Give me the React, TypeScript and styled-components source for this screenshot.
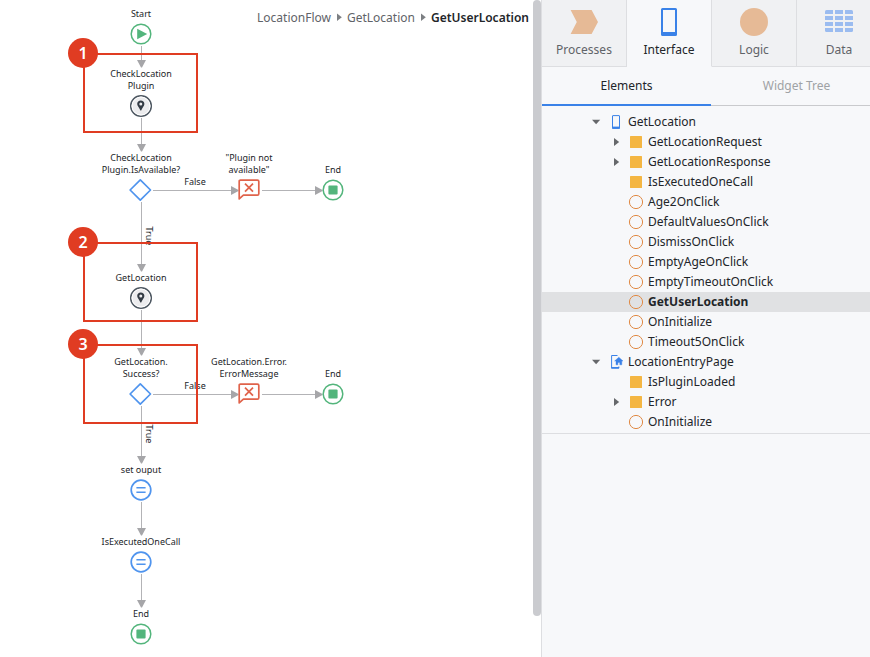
import React from "react";
import styled, { createGlobalStyle, css } from "styled-components";

const colors = {
  text: "#222529",
  muted: "#5f6368",
  faint: "#a0a2a5",
  blue: "#3a82e8",
  flowBlue: "#4f94ee",
  green: "#53b57c",
  red: "#e03c22",
  coral: "#e0634b",
  orange: "#e08a45",
  tan: "#e6ba96",
  yellow: "#f4b642",
  panel: "#f7f8fa",
  tab: "#f0f1f3",
  line: "#dddee1",
  edge: "#b3b3b6",
  arrow: "#a6a6a9",
};

const GlobalStyle = createGlobalStyle`
  *, *::before, *::after { box-sizing: border-box; }
  body {
    margin: 0;
    background: #fff;
    color: ${colors.text};
    font-family: "Noto Sans", sans-serif;
    font-size: 12px;
  }
  button { font: inherit; color: inherit; }
`;

const Page = styled.div`
  display: grid;
  grid-template-columns: minmax(0, 1fr) 329px;
  min-height: 100vh;
`;

/* ---------- Flow canvas ---------- */

const Canvas = styled.main`
  position: relative;
  min-height: 652px;
  background: #fff;
`;

const Breadcrumb = styled.nav`
  position: relative;
  z-index: 1;
  display: flex;
  justify-content: flex-end;
  align-items: center;
  gap: 3px;
  height: 34px;
  padding-right: 12px;
`;

const Crumb = styled.a<{ $current?: boolean }>`
  color: ${(p) => (p.$current ? colors.text : colors.muted)};
  font-weight: ${(p) => (p.$current ? 600 : 400)};
  text-decoration: none;
`;

const ScrollThumb = styled.div`
  position: absolute;
  top: 0;
  right: 0;
  width: 8px;
  height: 616px;
  border-radius: 4px;
  background: #cacbcf;
`;

const Diagram = styled.div`
  position: absolute;
  inset: 0;
  overflow: hidden;
  font-size: 9px;
  line-height: 12px;
`;

const Edges = styled.svg`
  position: absolute;
  inset: 0;
  width: 100%;
  height: 100%;
`;

const NodeBox = styled.div`
  position: absolute;
  display: flex;
  flex-direction: column;
  align-items: center;
  gap: 3px;
  width: 120px;
  text-align: center;
  svg {
    display: block;
    overflow: visible;
  }
`;

const NodeLabel = styled.div`
  display: flex;
  flex-direction: column;
  justify-content: flex-end;
  height: 24px;
  white-space: nowrap;
`;

const EdgeLabel = styled.span<{ $vertical?: boolean }>`
  position: absolute;
  transform: translate(-50%, -50%) ${(p) => (p.$vertical ? "rotate(90deg)" : "")};
`;

const Highlight = styled.div`
  position: absolute;
  width: 115px;
  height: 80px;
  border: 2px solid ${colors.red};
`;

const Badge = styled.span`
  position: absolute;
  top: -17px;
  left: -17px;
  display: grid;
  place-items: center;
  width: 30px;
  height: 30px;
  border-radius: 50%;
  background: ${colors.red};
  color: #fff;
  font-size: 16px;
  font-weight: 600;
`;

type Kind = "start" | "pin" | "if" | "message" | "end" | "assign";

function NodeIcon({ kind }: { kind: Kind }) {
  return (
    <svg width="22" height="22" viewBox="0 0 22 22" fill="none" aria-hidden="true">
      {kind === "start" && (
        <>
          <circle cx="11" cy="11" r="9.8" stroke={colors.green} strokeWidth="1.5" />
          <path d="M7.2 5.8 17.2 11 7.2 16.2Z" fill={colors.green} />
        </>
      )}
      {kind === "end" && (
        <>
          <circle cx="11" cy="11" r="9.8" stroke={colors.green} strokeWidth="1.5" />
          <rect x="6.4" y="6.4" width="9.2" height="9.2" rx="1" fill={colors.green} />
        </>
      )}
      {kind === "assign" && (
        <>
          <circle cx="11" cy="11" r="9.8" stroke={colors.flowBlue} strokeWidth="1.7" />
          <path d="M6.4 8.7h9.200M6.4 13.2h9.200" stroke={colors.flowBlue} strokeWidth="1.5" />
        </>
      )}
      {kind === "if" && (
        <path
          d="M10.3 .9 20.5 11 10.3 21.1 .1 11Z"
          stroke={colors.flowBlue}
          strokeWidth="1.7"
          strokeLinejoin="round"
        />
      )}
      {kind === "message" && (
        <>
          <path
            d="M1.2 19.9V2.2Q1.2 1.2 2.4 1.200H19.4Q20.8 1.2 20.8 2.6V14.8Q20.8 16.2 19.4 16.200H5.4Z"
            stroke={colors.coral}
            strokeWidth="1.7"
            strokeLinejoin="round"
          />
          <path d="M7 4.7l8 8M15 4.700l-8 8" stroke={colors.coral} strokeWidth="1.7" />
        </>
      )}
      {kind === "pin" && (
        <>
          <circle cx="11" cy="11" r="10.3" fill="#ececee" stroke="#4d5761" strokeWidth="1.5" />
          <circle cx="11" cy="11" r="9" stroke="#fff" strokeWidth="1" />
          <path
            fillRule="evenodd"
            d="M10.8 5.6c-2.1 0-3.6 1.5-3.6 3.5 0 2.2 2.4 3.8 3.2 6.5h.8c.8-2.7 3.2-4.3 3.2-6.5 0-2-1.5-3.5-3.6-3.500Zm0 2a1.500 1.500 0 1 1 0 3 1.500 1.500 0 0 1 0-3Z"
            fill="#333b44"
          />
        </>
      )}
    </svg>
  );
}

const nodes: { kind: Kind; x: number; y: number; label: string[] }[] = [
  { kind: "start", x: 141, y: 34, label: ["Start"] },
  { kind: "pin", x: 141, y: 106, label: ["CheckLocation", "Plugin"] },
  { kind: "if", x: 141, y: 190, label: ["CheckLocation", "Plugin.IsAvailable?"] },
  { kind: "message", x: 249, y: 190, label: ['"Plugin not', 'available"'] },
  { kind: "end", x: 333, y: 190, label: ["End"] },
  { kind: "pin", x: 141, y: 298, label: ["GetLocation"] },
  { kind: "if", x: 141, y: 394, label: ["GetLocation.", "Success?"] },
  { kind: "message", x: 249, y: 394, label: ["GetLocation.Error.", "ErrorMessage"] },
  { kind: "end", x: 333, y: 394, label: ["End"] },
  { kind: "assign", x: 141, y: 490, label: ["set ouput"] },
  { kind: "assign", x: 141, y: 562, label: ["IsExecutedOneCall"] },
  { kind: "end", x: 141, y: 634, label: ["End"] },
];

const downEdges = [
  [46, 67],
  [118, 151],
  [202, 271],
  [310, 355],
  [406, 463],
  [502, 535],
  [574, 607],
];

const rightEdges = [
  [190, 153, 238],
  [190, 262, 322],
  [394, 153, 238],
  [394, 262, 322],
];

const edgeLabels = [
  { text: "False", x: 195, y: 182 },
  { text: "False", x: 195, y: 386 },
  { text: "True", x: 149, y: 236, vertical: true },
  { text: "True", x: 149, y: 434, vertical: true },
];

const highlights = [
  { n: 1, y: 53 },
  { n: 2, y: 242 },
  { n: 3, y: 344 },
];

function Flow() {
  return (
    <Diagram>
      <Edges aria-hidden="true">
        {downEdges.map(([from, to]) => (
          <g key={from}>
            <path d={`M141.5 ${from}V${to - 6}`} stroke={colors.edge} />
            <path d={`M137 ${to - 7}h9l-4 7.500h-1Z`} fill={colors.arrow} />
          </g>
        ))}
        {rightEdges.map(([y, from, to]) => (
          <g key={`${y}-${from}`}>
            <path d={`M${from} ${y + 0.5}H${to - 6}`} stroke={colors.edge} />
            <path d={`M${to - 7} ${y - 4}v9l7.500-4v-1Z`} fill={colors.arrow} />
          </g>
        ))}
      </Edges>
      {nodes.map((n) => (
        <NodeBox key={`${n.x}-${n.y}`} style={{ left: n.x - 60, top: n.y - 38 }}>
          <NodeLabel>
            {n.label.map((line) => (
              <span key={line}>{line}</span>
            ))}
          </NodeLabel>
          <NodeIcon kind={n.kind} />
        </NodeBox>
      ))}
      {edgeLabels.map((l) => (
        <EdgeLabel key={`${l.x}-${l.y}`} $vertical={l.vertical} style={{ left: l.x, top: l.y }}>
          {l.text}
        </EdgeLabel>
      ))}
      {highlights.map((h) => (
        <Highlight key={h.n} style={{ left: 83, top: h.y }}>
          <Badge>{h.n}</Badge>
        </Highlight>
      ))}
    </Diagram>
  );
}

/* ---------- Side panel ---------- */

const Panel = styled.aside`
  min-width: 0;
  overflow: hidden;
  border-left: 1px solid ${colors.line};
  background: ${colors.panel};
`;

const LayerTabs = styled.div`
  display: grid;
  grid-template-columns: repeat(4, 85px);
  height: 67px;
`;

const LayerTab = styled.button<{ $active?: boolean }>`
  display: flex;
  flex-direction: column;
  align-items: center;
  gap: 4px;
  padding: 8px 0 0;
  border: 0;
  border-right: 1px solid ${colors.line};
  border-bottom: 1px solid ${(p) => (p.$active ? colors.panel : colors.line)};
  background: ${(p) => (p.$active ? colors.panel : colors.tab)};
  color: ${(p) => (p.$active ? colors.text : colors.muted)};
  line-height: 20px;
`;

const ViewTabs = styled.div`
  display: grid;
  grid-template-columns: 169px 171px;
  height: 39px;
`;

const ViewTab = styled.button<{ $active?: boolean }>`
  padding: 0 0 2px;
  border: 0;
  background: none;
  color: ${colors.faint};
  box-shadow: inset 0 -1px #c9cacd;
  ${(p) =>
    p.$active &&
    css`
      color: ${colors.text};
      box-shadow: inset 0 -2px ${colors.blue};
    `}
`;

const Tree = styled.ul`
  margin: 0;
  padding: 6px 0 1px;
  border-bottom: 1px solid ${colors.line};
  list-style: none;
`;

const TreeRow = styled.button<{ $level: number; $selected?: boolean }>`
  display: grid;
  grid-template-columns: 20px 20px auto;
  justify-content: start;
  align-items: center;
  width: 100%;
  height: 20px;
  padding: 0 0 0 ${(p) => 24 + p.$level * 20}px;
  border: 0;
  background: ${(p) => (p.$selected ? "#e0e1e3" : "none")};
  font-weight: ${(p) => (p.$selected ? 700 : 400)};
  line-height: 20px;
  text-align: left;
  svg {
    display: block;
    margin: 0 auto;
  }
`;

const RowLabel = styled.span`
  padding-left: 2px;
`;

const Caret = ({ open }: { open?: boolean }) => (
  <svg width="10" height="10" viewBox="0 0 10 10" aria-hidden="true">
    <path d={open ? "M1 2.800h8.200L5.100 7.200Z" : "M3 1 8.200 5 3 9Z"} fill="#66686b" />
  </svg>
);

const CrumbSeparator = () => (
  <svg width="10" height="10" viewBox="0 0 10 10" aria-hidden="true">
    <path d="M3 1.500 7.800 5.200 3 9Z" fill="#7c7f83" />
  </svg>
);

type ItemKind = "screen" | "home" | "variable" | "action";

function ItemIcon({ kind }: { kind: ItemKind }) {
  return (
    <svg width="16" height="16" viewBox="0 0 16 16" fill="none" aria-hidden="true">
      {kind === "screen" && (
        <>
          <rect x="4.5" y="1.6" width="7" height="12.8" rx=".4" stroke={colors.blue} />
          <path d="M4 13.6h8" stroke={colors.blue} strokeWidth="2" />
        </>
      )}
      {kind === "home" && (
        <>
          <path d="M9.5 1.5H3.6V14h7.2v-1.5" stroke={colors.blue} />
          <path d="M3.2 13.8h7.9" stroke={colors.blue} strokeWidth="1.6" />
          <path
            d="M10.8 3.2 15 7h-1.2v3.8h-2V8.4H9.9v2.4H8V7H6.6Z"
            fill={colors.blue}
            stroke={colors.blue}
            strokeWidth=".4"
          />
        </>
      )}
      {kind === "variable" && <rect x="2" y="2" width="12" height="12" rx=".5" fill={colors.yellow} />}
      {kind === "action" && <circle cx="8" cy="8" r="6.6" stroke={colors.orange} />}
    </svg>
  );
}

const tree: { level: number; kind: ItemKind; label: string; open?: boolean; selected?: boolean }[] = [
  { level: 1, kind: "screen", label: "GetLocation", open: true },
  { level: 2, kind: "variable", label: "GetLocationRequest", open: false },
  { level: 2, kind: "variable", label: "GetLocationResponse", open: false },
  { level: 2, kind: "variable", label: "IsExecutedOneCall" },
  { level: 2, kind: "action", label: "Age2OnClick" },
  { level: 2, kind: "action", label: "DefaultValuesOnClick" },
  { level: 2, kind: "action", label: "DismissOnClick" },
  { level: 2, kind: "action", label: "EmptyAgeOnClick" },
  { level: 2, kind: "action", label: "EmptyTimeoutOnClick" },
  { level: 2, kind: "action", label: "GetUserLocation", selected: true },
  { level: 2, kind: "action", label: "OnInitialize" },
  { level: 2, kind: "action", label: "Timeout5OnClick" },
  { level: 1, kind: "home", label: "LocationEntryPage", open: true },
  { level: 2, kind: "variable", label: "IsPluginLoaded" },
  { level: 2, kind: "variable", label: "Error", open: false },
  { level: 2, kind: "action", label: "OnInitialize" },
];

const ProcessesIcon = () => (
  <svg width="28" height="28" viewBox="0 0 28 28" aria-hidden="true">
    <path d="M.6 2h21L28 14l-6.4 12H.6l6.2-12Z" fill={colors.tan} />
  </svg>
);

const InterfaceIcon = () => (
  <svg width="28" height="28" viewBox="0 0 28 28" aria-hidden="true">
    <path
      fillRule="evenodd"
      d="M7.5 0h13A1.5 1.5 0 0 1 22 1.5v25a1.5 1.5 0 0 1-1.5 1.5h-13A1.5 1.5 0 0 1 6 26.5V1.5A1.5 1.5 0 0 1 7.5 0ZM8 2v22h12V2Z"
      fill={colors.blue}
    />
  </svg>
);

const LogicIcon = () => (
  <svg width="28" height="28" viewBox="0 0 28 28" aria-hidden="true">
    <circle cx="14" cy="14" r="14" fill={colors.tan} />
  </svg>
);

const DataIcon = () => (
  <svg width="28" height="28" viewBox="0 0 28 28" aria-hidden="true">
    <clipPath id="data-grid">
      <rect y="2" width="28" height="22" rx="1.5" />
    </clipPath>
    <g clipPath="url(#data-grid)" fill="#9bbcf0">
      {[2, 8, 14, 20].map((y) =>
        [0, 10, 20].map((x) => <rect key={`${x}-${y}`} x={x} y={y} width="8" height="4" />),
      )}
    </g>
  </svg>
);

export default function App() {
  return (
    <>
      <GlobalStyle />
      <Page>
        <Canvas>
          <Flow />
          <Breadcrumb aria-label="Breadcrumb">
            <Crumb href="#flow">LocationFlow</Crumb>
            <CrumbSeparator />
            <Crumb href="#screen">GetLocation</Crumb>
            <CrumbSeparator />
            <Crumb href="#action" $current aria-current="page">
              GetUserLocation
            </Crumb>
          </Breadcrumb>
          <ScrollThumb />
        </Canvas>
        <Panel>
          <LayerTabs role="tablist" aria-label="Layers">
            <LayerTab role="tab">
              <ProcessesIcon />
              Processes
            </LayerTab>
            <LayerTab role="tab" aria-selected $active>
              <InterfaceIcon />
              Interface
            </LayerTab>
            <LayerTab role="tab">
              <LogicIcon />
              Logic
            </LayerTab>
            <LayerTab role="tab">
              <DataIcon />
              Data
            </LayerTab>
          </LayerTabs>
          <ViewTabs role="tablist" aria-label="Views">
            <ViewTab role="tab" aria-selected $active>
              Elements
            </ViewTab>
            <ViewTab role="tab">Widget Tree</ViewTab>
          </ViewTabs>
          <Tree>
            {tree.map((item, i) => (
              <li key={i}>
                <TreeRow $level={item.level} $selected={item.selected} aria-expanded={item.open}>
                  <span>{item.open !== undefined && <Caret open={item.open} />}</span>
                  <ItemIcon kind={item.kind} />
                  <RowLabel>{item.label}</RowLabel>
                </TreeRow>
              </li>
            ))}
          </Tree>
        </Panel>
      </Page>
    </>
  );
}
